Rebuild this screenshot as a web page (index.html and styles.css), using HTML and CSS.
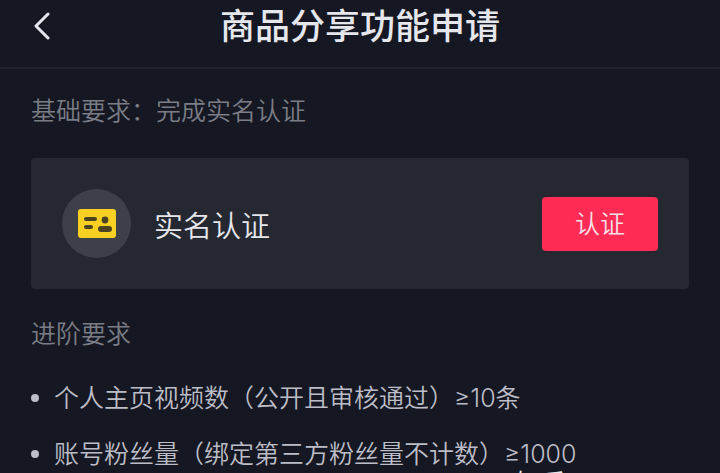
FILE: index.html
```
<!DOCTYPE html>
<html lang="zh-CN">
<head>
  <meta charset="UTF-8">
  <meta name="viewport" content="width=device-width, initial-scale=1.0">
  <title>商品分享功能申请</title>
  <link rel="stylesheet" href="styles.css">
</head>
<body>

<header class="topbar">
  <button class="back" type="button" aria-label="返回">
    <svg width="16" height="28" viewBox="0 0 16 28" fill="none" stroke="#e6e7ec" stroke-width="3" stroke-linecap="round" stroke-linejoin="round">
      <path d="M14 2 L2 14 L14 26"/>
    </svg>
  </button>
  <h1>商品分享功能申请</h1>
</header>

<main>
  <h2>基础要求：完成实名认证</h2>

  <section class="card">
    <div class="icon">
      <svg width="40" height="30" viewBox="0 0 40 30">
        <rect x="1" y="0" width="38" height="29" rx="3" fill="#f8d022"/>
        <g fill="#4c4420">
          <rect x="7" y="8" width="13" height="4" rx="2"/>
          <rect x="7" y="16" width="9" height="4" rx="2"/>
          <circle cx="28" cy="11" r="3.4"/>
          <rect x="21" y="17" width="14" height="6" rx="3"/>
        </g>
      </svg>
    </div>
    <span class="name">实名认证</span>
    <button class="verify" type="button">认证</button>
  </section>

  <h2>进阶要求</h2>

  <ul class="requirements">
    <li>个人主页视频数（公开且审核通过）≥10条</li>
    <li>账号粉丝量（绑定第三方粉丝量不计数）≥1000</li>
  </ul>
</main>

<div class="watermark">知乎 @Sable</div>

</body>
</html>
```
FILE: styles.css
```
* {
  box-sizing: border-box;
}

body {
  margin: 0;
  min-height: 100vh;
  position: relative;
  overflow: hidden;
  background-color: #151722;
  color: #e6e7ec;
  font-family: Inter, "Noto Sans CJK SC", sans-serif;
  font-weight: 350;
}

button {
  border: none;
  padding: 0;
  font-family: inherit;
  cursor: pointer;
}

/* Barra superior */
.topbar {
  display: grid;
  grid-template-columns: 48px 1fr 48px;
  align-items: center;
  height: 69px;
  padding: 0 20px 16px 20px;
  border-bottom: 2px solid #1f212b;
}

.back {
  display: flex;
  justify-content: center;
  padding-right: 4px;
  background: none;
}

h1 {
  margin: 0;
  font-size: 35px;
  font-weight: 500;
  line-height: 52px;
  text-align: center;
}

main {
  padding: 24px 31px 0 31px;
}

h2 {
  margin: 0;
  color: #7b7d86;
  font-size: 25px;
  font-weight: 350;
  line-height: 36px;
}

.card {
  display: flex;
  align-items: center;
  margin: 29px 0 27px 0;
  padding: 31px;
  border-radius: 4px;
  background-color: #252831;
}

.icon {
  display: flex;
  align-items: center;
  justify-content: center;
  width: 69px;
  height: 69px;
  border-radius: 50%;
  background-color: #3e4049;
}

.name {
  flex: 1;
  margin-left: 23px;
  font-size: 29px;
}

.verify {
  padding: 9px 33px;
  border-radius: 4px;
  background-color: #fe2c55;
  color: #fbdfe6;
  font-size: 25px;
  font-weight: 350;
  line-height: 36px;
}

.requirements {
  display: grid;
  gap: 20px;
  margin: 28px 0 0 0;
  padding: 0;
  list-style: none;
  color: #bcbdc6;
  font-size: 25px;
  line-height: 36px;
}

.requirements li {
  display: flex;
  align-items: center;
}

.requirements li::before {
  content: "";
  width: 8px;
  height: 8px;
  margin-right: 15px;
  border-radius: 50%;
  background-color: #bcbdc6;
}

/* Marca de agua, cortada por el borde inferior */
.watermark {
  position: absolute;
  left: 516px;
  bottom: -28px;
  color: #e6e7ec;
  font-size: 25px;
  font-weight: 400;
  line-height: 36px;
}
```
